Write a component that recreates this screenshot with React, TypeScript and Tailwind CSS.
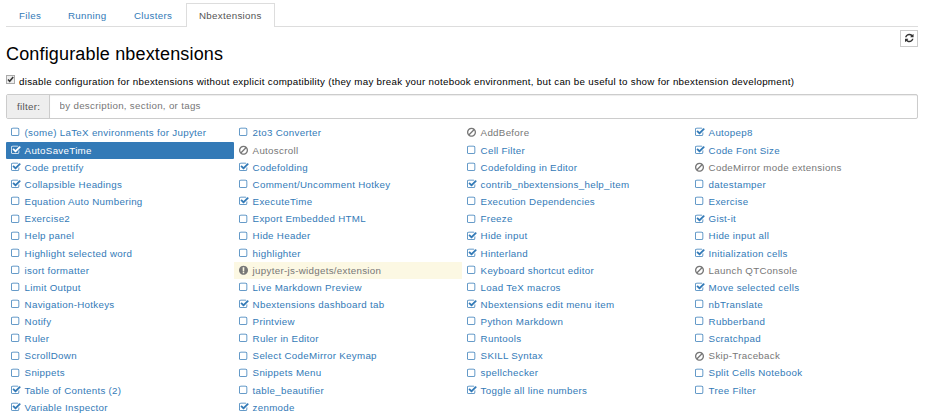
type State = "off" | "on" | "ban" | "warn";
type Ext = [string, State?, boolean?];

const columns: Ext[][] = [
  [
    ["(some) LaTeX environments for Jupyter"], ["AutoSaveTime", "on", true], ["Code prettify", "on"],
    ["Collapsible Headings", "on"], ["Equation Auto Numbering"], ["Exercise2"], ["Help panel"],
    ["Highlight selected word"], ["isort formatter"], ["Limit Output"], ["Navigation-Hotkeys"], ["Notify"],
    ["Ruler"], ["ScrollDown"], ["Snippets"], ["Table of Contents (2)", "on"], ["Variable Inspector", "on"],
  ],
  [
    ["2to3 Converter"], ["Autoscroll", "ban"], ["Codefolding", "on"], ["Comment/Uncomment Hotkey"],
    ["ExecuteTime", "on"], ["Export Embedded HTML"], ["Hide Header"], ["highlighter"],
    ["jupyter-js-widgets/extension", "warn"], ["Live Markdown Preview"], ["Nbextensions dashboard tab", "on"],
    ["Printview"], ["Ruler in Editor"], ["Select CodeMirror Keymap"], ["Snippets Menu"], ["table_beautifier"],
    ["zenmode", "on"],
  ],
  [
    ["AddBefore", "ban"], ["Cell Filter"], ["Codefolding in Editor"], ["contrib_nbextensions_help_item", "on"],
    ["Execution Dependencies"], ["Freeze"], ["Hide input", "on"], ["Hinterland", "on"],
    ["Keyboard shortcut editor"], ["Load TeX macros"], ["Nbextensions edit menu item", "on"],
    ["Python Markdown"], ["Runtools"], ["SKILL Syntax"], ["spellchecker"], ["Toggle all line numbers", "on"],
  ],
  [
    ["Autopep8", "on"], ["Code Font Size", "on"], ["CodeMirror mode extensions", "ban"], ["datestamper"],
    ["Exercise"], ["Gist-it", "on"], ["Hide input all"], ["Initialization cells", "on"],
    ["Launch QTConsole", "ban"], ["Move selected cells", "on"], ["nbTranslate"], ["Rubberband"],
    ["Scratchpad"], ["Skip-Traceback", "ban"], ["Split Cells Notebook"], ["Tree Filter"],
  ],
];

const paths: Record<State | "refresh", string> = {
  off: "M1120 256h-832q-66 0-113 47t-47 113v832q0 66 47 113t113 47h832q66 0 113-47t47-113v-832q0-66-47-113t-113-47zM1408 416v832q0 119-84.5 203.5t-203.5 84.5h-832q-119 0-203.5-84.5t-84.5-203.5v-832q0-119 84.5-203.5t203.5-84.5h832q119 0 203.5 84.5t84.5 203.5z",
  on: "M1408 930v318q0 119-84.5 203.5t-203.5 84.5h-832q-119 0-203.5-84.5t-84.5-203.5v-832q0-119 84.5-203.5t203.5-84.5h832q63 0 117 25 15 7 18 23 3 17-9 29l-49 49q-10 10-23 10-3 0-9-2-23-6-45-6h-832q-66 0-113 47t-47 113v832q0 66 47 113t113 47h832q66 0 113-47t47-113v-254q0-13 9-22l64-64q10-10 23-10 6 0 12 3 20 8 20 29zM1639 441l-814 814q-24 24-57 24t-57-24l-430-430q-24-24-24-57t24-57l110-110q24-24 57-24t57 24l263 263 647-647q24-24 57-24t57 24l110 110q24 24 24 57t-24 57z",
  ban: "M1312 893q0-161-87-295l-754 753q137 89 297 89 111 0 211.500-43.500t173.500-116.500 116-174.500 43-212.500zM313 1192l755-754q-135-91-300-91-148 0-273 73t-198 199-73 274q0 162 89 299zM1536 893q0 157-61 300t-163.500 246-245 164-298.500 61-298.500-61-245-164-163.500-246-61-300 61-299.500 163.500-245.500 245-164 298.500-61 298.500 61 245 164 163.500 245.500 61 299.500z",
  warn: "M768 128q209 0 385.500 103t279.500 279.500 103 385.500-103 385.500-279.500 279.500-385.500 103-385.500-103-279.500-279.500-103-385.500 103-385.500 279.500-279.500 385.500-103zM896 1375v-190q0-14-9-23.500t-22-9.500h-192q-13 0-23 10t-10 23v190q0 13 10 23t23 10h192q13 0 22-9.500t9-23.500zM894 1031l18-621q0-12-10-18-10-8-24-8h-220q-14 0-24 8-10 6-10 18l17 621q0 10 10 17.500t24 7.500h185q14 0 23.500-7.500t10.500-17.500z",
  refresh: "M1511 1056q0 5-1 7-64 268-268 434.500t-478 166.500q-146 0-282.500-55t-243.500-157l-129 129q-19 19-45 19t-45-19-19-45v-448q0-26 19-45t45-19h448q26 0 45 19t19 45-19 45l-137 137q71 66 161 102t187 36q134 0 250-65t186-179q11-17 53-117 8-23 30-23h192q13 0 22.500 9.500t9.500 22.500zM1536 256v448q0 26-19 45t-45 19h-448q-26 0-45-19t-19-45 19-45l138-138q-148-137-349-137-134 0-250 65t-186 179q-11 17-53 117-8 23-30 23h-199q-13 0-22.500-9.500t-9.500-22.500v-7q65-268 270-434.500t480-166.500q146 0 284 55.500t245 156.500l130-129q19-19 45-19t45 19 19 45z",
};

function Icon({ name, className }: { name: State | "refresh"; className: string }) {
  return (
    <svg viewBox="0 0 1792 1792" fill="currentColor" className={`shrink-0 ${className}`}>
      <path d={paths[name]} />
    </svg>
  );
}

function Row({ ext }: { ext: Ext }) {
  const [label, state = "off", selected] = ext;
  const tone = selected
    ? "bg-[#337ab7] text-white rounded-[1px]"
    : state === "warn"
      ? "bg-[#fcf8e3] text-[#777]"
      : state === "ban"
        ? "text-[#777]"
        : "text-[#337ab7]";
  return (
    <li className={`flex h-[17.13px] items-center pl-[4.7px] first:mb-[0.6px] ${tone}`}>
      <Icon name={state} className="mr-[3.4px] size-[10.5px]" />
      <span className="whitespace-nowrap leading-[17px]">{label}</span>
    </li>
  );
}

export default function App() {
  return (
    <div className="h-[418px] w-[927px] overflow-hidden bg-white pl-[6px] pr-[9px] pt-[3px] font-['Liberation_Sans',Arial,sans-serif] text-[9.75px] tracking-[0.3px] text-black">
      <nav className="flex h-6 border-b border-[#ddd] text-[#337ab7]">
        <a className="w-[49px] pl-[13px] leading-[25px]">Files</a>
        <a className="w-[66px] pl-[13px] leading-[25px]">Running</a>
        <a className="w-[65px] pl-[13px] leading-[25px]">Clusters</a>
        <a className="-mb-px h-6 w-[89px] border border-b-0 border-[#ddd] bg-white pl-[12px] leading-[23px] text-[#555]">Nbextensions</a>
      </nav>
      <header className="flex h-[47px] justify-between">
        <h1 className="pt-[15px] text-[18px] leading-6 tracking-[0.16px]">Configurable nbextensions</h1>
        <button className="mt-[3px] flex h-[17px] w-[18px] items-center justify-center border border-[#ccc] pb-px pl-px text-[#333]">
          <Icon name="refresh" className="size-[10px]" />
        </button>
      </header>
      <label className="flex h-5 items-start">
        <span className="mt-[1px] flex size-[9px] items-center justify-center border border-[#aaa] bg-[#eee]">
          <svg viewBox="0 0 7 7" className="size-[7px]" fill="none" stroke="#333" strokeWidth="1.5">
            <path d="M1 3.500 2.700 5.300 6.200 1" />
          </svg>
        </span>
        <span className="ml-1 whitespace-nowrap leading-4 tracking-[0.29px]">disable configuration for nbextensions without explicit compatibility (they may break your notebook environment, but can be useful to show for nbextension development)</span>
      </label>
      <div className="flex h-[25px] rounded-[2px] border border-[#ccc]">
        <span className="w-[43px] border-r border-[#ccc] bg-[#eee] pl-[10px] leading-[23px] text-[#555]">filter:</span>
        <input className="min-w-0 flex-1 pl-[9.5px] tracking-[0.3px] shadow-[inset_0_1px_1px_rgba(0,0,0,0.075)] outline-none placeholder:text-[#777]" placeholder="by description, section, or tags" />
      </div>
      <main className="grid grid-cols-4 pt-[5px]">
        {columns.map((col, i) => (
          <ul key={i}>
            {col.map((ext) => <Row key={ext[0]} ext={ext} />)}
          </ul>
        ))}
      </main>
    </div>
  );
}
